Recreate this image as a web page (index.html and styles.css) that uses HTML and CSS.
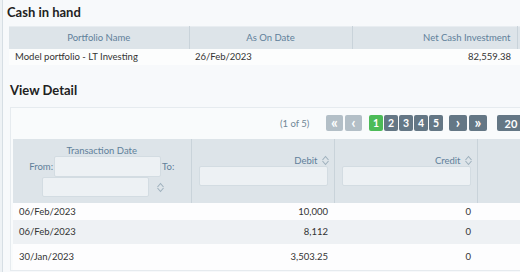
FILE: index.html
```html
<html>
  <head>
    <title>Cash in hand</title>
    <link rel="stylesheet" href="styles.css">
  </head>
  <body>
    <div class="page">

      <h2 class="section-title">Cash in hand</h2>

      <table class="grid cash-table">
        <colgroup>
          <col class="col-name">
          <col class="col-date">
          <col class="col-amount">
          <col class="col-rest">
        </colgroup>
        <thead>
          <tr>
            <th>Portfolio Name</th>
            <th>As On Date</th>
            <th class="right">Net Cash Investment</th>
            <th></th>
          </tr>
        </thead>
        <tbody>
          <tr>
            <td>Model portfolio - LT Investing</td>
            <td>26/Feb/2023</td>
            <td class="right">82,559.38</td>
            <td></td>
          </tr>
        </tbody>
      </table>

      <h2 class="section-title detail-title">View Detail</h2>

      <div class="panel">
        <div class="paginator">
          <span class="page-info">(1 of 5)</span>
          <div class="btn-group">
            <span class="pg-btn wide disabled">&laquo;</span>
            <span class="pg-btn wide disabled">&lsaquo;</span>
          </div>
          <div class="btn-group pages">
            <span class="pg-btn current">1</span>
            <span class="pg-btn">2</span>
            <span class="pg-btn">3</span>
            <span class="pg-btn">4</span>
            <span class="pg-btn">5</span>
          </div>
          <div class="btn-group">
            <span class="pg-btn wide next">&rsaquo;</span>
            <span class="pg-btn wide next">&raquo;</span>
          </div>
          <span class="pg-btn rows-select">20</span>
        </div>

        <table class="grid detail-table">
          <colgroup>
            <col class="col-tdate">
            <col class="col-num">
            <col class="col-num">
            <col class="col-rest">
          </colgroup>
          <thead>
            <tr>
              <th>
                <div class="th-title">Transaction Date</div>
                <div class="filter-line">
                  <label>From:</label>
                  <span class="filter-input from-input"></span>
                  <label>To:</label>
                </div>
                <div class="filter-line">
                  <span class="filter-input to-input"></span>
                  <svg class="sort-icon" width="9" height="11" viewBox="0 0 9 11">
                    <path d="M1.5 5 L4.5 1.5 L7.5 5 M1.5 6 L4.5 9.5 L7.5 6" fill="none" stroke="#9fb1bd" stroke-width="1.1"/>
                  </svg>
                </div>
              </th>
              <th>
                <div class="th-label">Debit
                  <svg class="sort-icon" width="9" height="11" viewBox="0 0 9 11">
                    <path d="M1.5 5 L4.5 1.5 L7.5 5 M1.5 6 L4.5 9.5 L7.5 6" fill="none" stroke="#9fb1bd" stroke-width="1.1"/>
                  </svg>
                </div>
                <span class="filter-input num-input"></span>
              </th>
              <th>
                <div class="th-label">Credit
                  <svg class="sort-icon" width="9" height="11" viewBox="0 0 9 11">
                    <path d="M1.5 5 L4.5 1.5 L7.5 5 M1.5 6 L4.5 9.5 L7.5 6" fill="none" stroke="#9fb1bd" stroke-width="1.1"/>
                  </svg>
                </div>
                <span class="filter-input num-input"></span>
              </th>
              <th></th>
            </tr>
          </thead>
          <tbody>
            <tr class="row-a">
              <td>06/Feb/2023</td>
              <td class="right">10,000</td>
              <td class="right">0</td>
              <td></td>
            </tr>
            <tr class="row-b">
              <td>06/Feb/2023</td>
              <td class="right">8,112</td>
              <td class="right">0</td>
              <td></td>
            </tr>
            <tr class="row-c">
              <td>30/Jan/2023</td>
              <td class="right">3,503.25</td>
              <td class="right">0</td>
              <td></td>
            </tr>
          </tbody>
        </table>
      </div>

    </div>
  </body>
</html>
```

FILE: styles.css
```css
body {
  margin: 0px;
  background-color: #eef2f5;
  font-family: Lato, "Open Sans", sans-serif;
  color: #333333;
  overflow: hidden;
}

.page {
  margin-left: 2px;
  width: 760px;
  height: 272px;
  border-left: 1px solid #d6dee4;
  background-color: #f7f9fb;
  padding-top: 4px;
  overflow: hidden;
}

.section-title {
  margin: 0px 0px 6px 4px;
  font-size: 13px;
  line-height: 16px;
  font-weight: bold;
  color: #222222;
}

.detail-title {
  margin: 17px 0px 9px 7px;
}

.grid {
  border-collapse: collapse;
  table-layout: fixed;
  font-size: 9.5px;
}

.grid th {
  background-color: #dde4e9;
  color: #60809a;
  font-weight: normal;
  border-left: 1px solid #c9d3da;
  padding: 0px;
}

.grid th:first-child {
  border-left: none;
}

.grid td {
  padding: 0px;
  white-space: nowrap;
}

.right {
  text-align: right;
}

/* cash table */

.cash-table {
  width: 626px;
  margin-left: 6px;
  border-top: 1px solid #e8edf1;
}

.cash-table th {
  height: 22px;
  text-align: center;
}

.cash-table th.right {
  text-align: right;
  padding-right: 6px;
}

.cash-table td {
  height: 16px;
  background-color: #fcfdfd;
  padding-left: 6px;
}

.cash-table td.right {
  padding-right: 6px;
}

.col-name {
  width: 180px;
}

.col-date {
  width: 163px;
}

.col-amount {
  width: 165px;
}

.col-rest {
  width: 118px;
}

/* detail panel */

.panel {
  margin-left: 7px;
  border: 1px solid #e6ebef;
  background-color: #f9fbfc;
  padding: 0px 0px 0px 2px;
}

.paginator {
  height: 31px;
  display: flex;
  align-items: center;
  padding-left: 267px;
}

.page-info {
  width: 46px;
  font-size: 9.5px;
  color: #6f8797;
}

.btn-group {
  display: flex;
  gap: 2px;
}

.btn-group.pages {
  gap: 1px;
  margin-left: 7px;
  margin-right: 6px;
}

.pg-btn {
  display: flex;
  align-items: center;
  justify-content: center;
  width: 14px;
  height: 16px;
  border-radius: 2px;
  background-color: #647785;
  color: #ffffff;
  font-size: 10.5px;
  font-weight: bold;
}

.pg-btn.wide {
  width: 17px;
  font-size: 15px;
  font-weight: bold;
  line-height: 14px;
  padding-bottom: 2px;
  box-sizing: border-box;
}

.pg-btn.wide.next {
  width: 18px;
}

.pg-btn.disabled {
  background-color: #b3bfc7;
}

.pg-btn.current {
  background-color: #4cbb58;
}

.pg-btn.rows-select {
  width: 28px;
  margin-left: 10px;
  font-size: 11px;
}

/* detail table */

.detail-table {
  width: 582px;
}

.detail-table th {
  height: 64px;
  vertical-align: middle;
}

.detail-table td {
  padding-left: 6px;
  padding-right: 6px;
}

.col-tdate {
  width: 178px;
}

.col-num {
  width: 143px;
}

.th-title {
  text-align: center;
  line-height: 11px;
  margin-top: 1px;
}

.filter-line {
  display: flex;
  align-items: center;
  justify-content: center;
  gap: 1px;
}

.filter-line label {
  font-size: 9.5px;
}

.filter-input {
  display: block;
  box-sizing: border-box;
  height: 20px;
  background-color: #edf1f4;
  border: 1px solid #d3dce2;
  border-radius: 2px;
}

.from-input {
  width: 107px;
  height: 21px;
}

.to-input {
  width: 107px;
  margin-left: 4px;
  margin-right: 6px;
}

.th-label {
  display: flex;
  align-items: center;
  justify-content: flex-end;
  gap: 3px;
  padding-right: 4px;
  line-height: 10px;
  height: 10px;
  margin-bottom: 0px;
}

.filter-input.num-input {
  margin-left: 7px;
  width: 129px;
}

.sort-icon {
  display: block;
}

.row-a td {
  height: 17px;
  background-color: #fdfdfe;
}

.row-b td {
  height: 24px;
  background-color: #eef1f4;
}

.row-c td {
  height: 26px;
  background-color: #fdfdfe;
}
```
